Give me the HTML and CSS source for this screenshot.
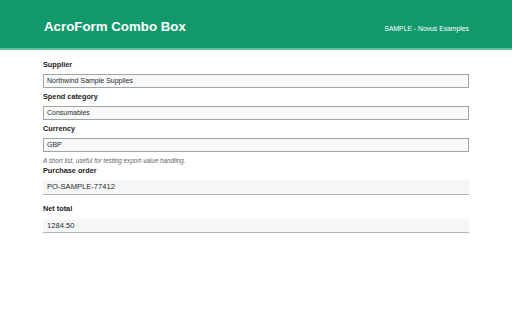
FILE: index.html
```html
<!DOCTYPE html>
<html lang="en">
<head>
    <meta charset="UTF-8">
    <meta name="viewport" content="width=device-width, initial-scale=1.0">
    <title>AcroForm Combo Box</title>
    <link rel="stylesheet" href="styles.css">
</head>
<body>
    <header class="top-bar">
        <h1 class="title">AcroForm Combo Box</h1>
        <div class="tagline">SAMPLE - Novus Examples</div>
    </header>

    <main class="form">
        <div class="field">
            <label class="field-label">Supplier</label>
            <div class="combo">Northwind Sample Supplies</div>
        </div>
        <div class="field">
            <label class="field-label">Spend category</label>
            <div class="combo">Consumables</div>
        </div>
        <div class="field with-hint">
            <label class="field-label">Currency</label>
            <div class="combo">GBP</div>
            <div class="hint">A short list, useful for testing export-value handling.</div>
        </div>
        <div class="field">
            <label class="field-label">Purchase order</label>
            <div class="text-input po">PO-SAMPLE-77412</div>
        </div>
        <div class="field">
            <label class="field-label total">Net total</label>
            <div class="text-input net">1284.50</div>
        </div>
    </main>
</body>
</html>
```

FILE: styles.css
```css
body {
    margin: 0;
    font-family: "Liberation Sans", Arial, sans-serif;
    background: #fff;
    color: #222;
}
.top-bar {
    height: 48px;
    background: #12996b;
    border-bottom: 2px solid #5cc49c;
    display: flex;
    align-items: baseline;
    justify-content: space-between;
    padding: 0 43px 0 44px;
    color: #fff;
}
.title {
    margin: 0;
    padding-top: 19px;
    font-size: 13.3px;
    line-height: 16px;
    font-weight: bold;
}
.tagline {
    font-size: 6.8px;
}
.form {
    padding: 10px 43px 0 43px;
}
.field {
    margin-bottom: 4px;
}
.field.with-hint {
    margin-bottom: 1px;
}
.field-label {
    display: block;
    font-size: 7.3px;
    line-height: 10px;
    font-weight: bold;
    color: #222;
    margin-bottom: 4px;
}
.combo {
    box-sizing: border-box;
    height: 14px;
    border: 1px solid #a3a3a3;
    background: #f7f8fa;
    font-size: 7px;
    line-height: 12px;
    padding: 0 3px;
    color: #2a2a2a;
}
.hint {
    margin-top: 4px;
    font-size: 6.3px;
    line-height: 9px;
    font-style: italic;
    color: #666;
}
.text-input {
    box-sizing: border-box;
    background: #f5f6f7;
    border-bottom: 1px solid #b4b4b4;
    font-size: 7.6px;
    padding: 0 4px;
    color: #2a2a2a;
}
.po {
    height: 15px;
    line-height: 14px;
    margin-top: 1px;
}
.total {
    margin-top: 9px;
    margin-bottom: 5px;
}
.net {
    height: 14px;
    line-height: 13px;
}
```
